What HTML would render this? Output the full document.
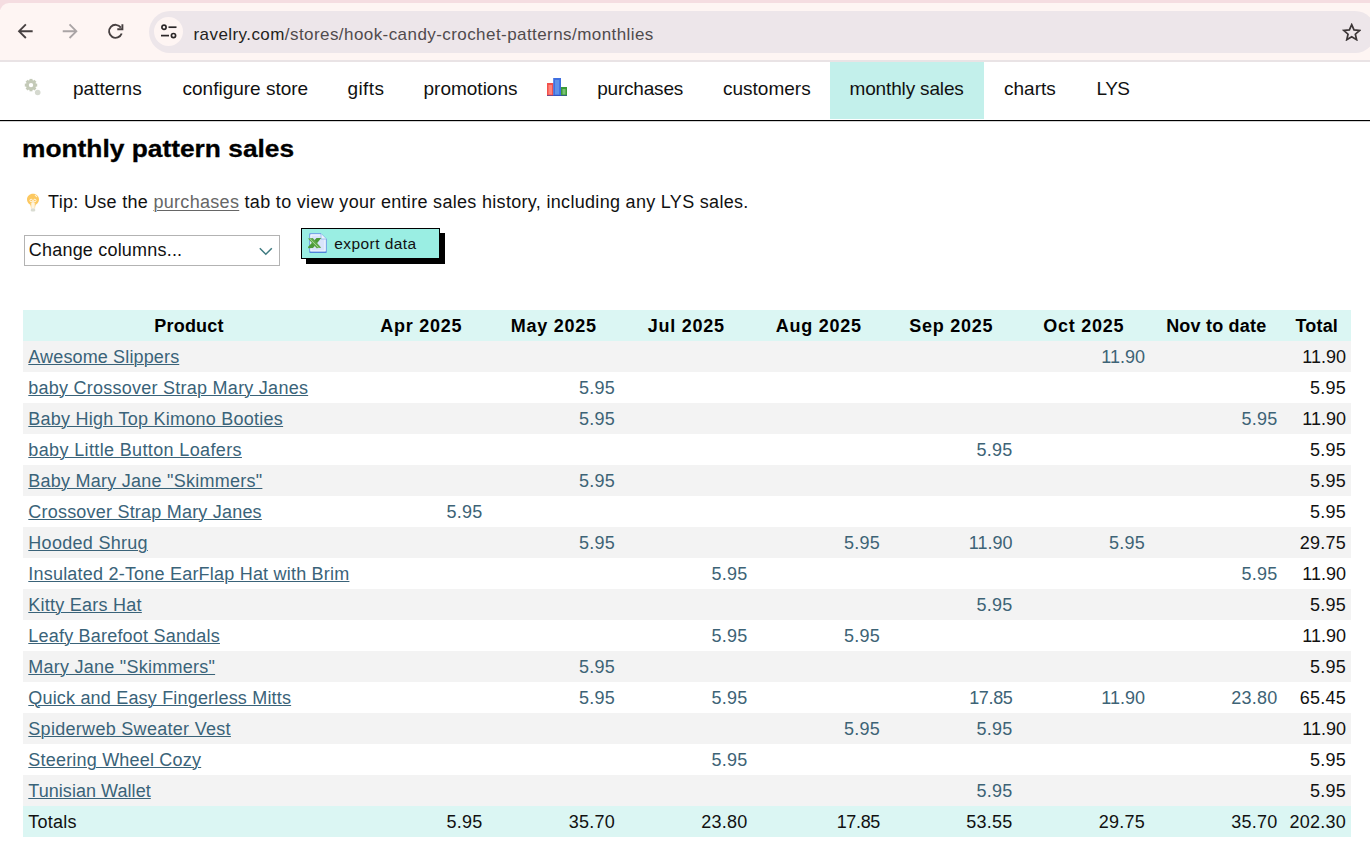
<!DOCTYPE html>
<html lang="en">
<head>
<meta charset="utf-8">
<title>monthly pattern sales</title>
<style>
html,body{margin:0;padding:0;}
body{width:1370px;height:856px;overflow:hidden;background:#fff;position:relative;font-family:"Liberation Sans",sans-serif;color:#111;}
.abs{position:absolute;}
/* browser chrome */
#strip{left:0;top:0;width:1370px;height:10px;background:#f5dde1;}
#toolbar{left:0;top:3px;width:1370px;height:57px;background:#fef5f3;border-top-left-radius:9px;}
#tbline{left:0;top:60px;width:1370px;height:2px;background:#e9e3e5;}
#pill{left:149px;top:11px;width:1227px;height:41.5px;border-radius:21px;background:#ede6ea;}
#site{left:154px;top:17px;width:29px;height:29px;border-radius:50%;background:#fef5f3;}
#url{left:193.5px;top:23.5px;font-size:17px;letter-spacing:0.43px;line-height:22px;white-space:nowrap;color:#504b4d;}
#url b{font-weight:400;color:#231f20;}
/* nav */
#navline{left:0;top:120px;width:1370px;height:1px;background:#000;border-bottom:1px solid #d4d4d4;}
#active{left:830px;top:62px;width:154px;height:56.5px;background:#c3f0eb;}
.nav{top:77px;font-size:19px;line-height:24px;white-space:nowrap;color:#111;}
/* heading */
#h1{left:21.6px;-webkit-text-stroke:0.3px #000;top:133px;font-size:24px;line-height:32px;font-weight:700;white-space:nowrap;color:#000;transform-origin:0 50%;transform:scaleX(1.097);}
#tip{left:48px;top:190px;font-size:18px;letter-spacing:0.31px;line-height:24px;white-space:nowrap;color:#111;}
#tip a{color:#666;text-decoration:underline;text-decoration-thickness:1px;text-underline-offset:2px;}
#sel{left:24px;top:235px;width:254px;height:29px;border:1px solid #b3b3b3;background:#fff;}
#seltxt{left:28.8px;top:238px;font-size:18px;letter-spacing:0.2px;line-height:24px;white-space:nowrap;color:#111;}
#btn{left:301px;top:228px;width:137px;height:29px;border:1px solid #000;background:#9aeee3;box-shadow:5px 5px 0 #000;}
#btntxt{left:334.2px;top:234px;font-size:15.5px;letter-spacing:0.45px;line-height:20px;white-space:nowrap;color:#111;}
/* table */
table{position:absolute;left:23px;top:310px;width:1328px;border-collapse:collapse;border-spacing:0;table-layout:fixed;font-size:18px;}
col.c0{width:332px;} col.cm{width:132.5px;} col.ct{width:68.5px;}
tr{height:31px;}
td,th{padding:2px 0 0 0;margin:0;height:31px;line-height:29px;box-sizing:border-box;white-space:nowrap;overflow:visible;vertical-align:top;}
th{font-weight:700;text-align:center;color:#000;background:#dbf6f3;letter-spacing:0.2px;}
td{text-align:right;padding:2px 5px 0 0;color:#3d6376;letter-spacing:0.25px;}
td.p{text-align:left;padding:2px 0 0 5.3px;}
td.p a{color:#3a6379;text-decoration:underline;text-decoration-thickness:1.3px;text-underline-offset:1px;}
td.t{color:#111;}
th.m{letter-spacing:0.72px;}
td.n1{letter-spacing:0;}
td.n2{letter-spacing:-0.35px;}
tr.o td{background:#f3f3f3;}
tr.tot td{background:#dbf6f3;color:#111;}
</style>
</head>
<body>
<div class="abs" id="strip"></div>
<div class="abs" id="toolbar"></div>
<div class="abs" id="tbline"></div>
<div class="abs" id="pill"></div>
<div class="abs" id="site"></div>
<!-- toolbar icons -->
<svg class="abs" style="left:14.400px;top:20.200px" width="22.400" height="22.400" viewBox="0 0 24 24"><path d="M20 11H7.83l5.59-5.59L12 4l-8 8 8 8 1.41-1.41L7.83 13H20v-2z" fill="#474041"/></svg>
<svg class="abs" style="left:59.200px;top:20.200px" width="22.400" height="22.400" viewBox="0 0 24 24"><path d="M12 4l-1.41 1.41L16.17 11H4v2h12.17l-5.58 5.59L12 20l8-8z" fill="#aaa4a5"/></svg>
<svg class="abs" style="left:105px;top:21px" width="21" height="21" viewBox="0 0 21 21" fill="none" stroke="#474041" stroke-width="1.900"><path d="M15.900 6.600A6.500 6.500 0 1 0 16.700 12.500"/><path d="M17.400 3.200V8.300H12.300"/></svg>
<svg class="abs" style="left:160px;top:23px" width="18" height="17" viewBox="0 0 18 17" fill="none" stroke="#2b2728" stroke-width="1.7"><circle cx="4" cy="4.2" r="2.1"/><line x1="8.5" y1="4.2" x2="16.5" y2="4.2"/><circle cx="13.5" cy="12.6" r="2.1"/><line x1="1" y1="12.6" x2="9" y2="12.6"/></svg>
<svg class="abs" style="left:1341.700px;top:22.800px" width="19.400" height="18.500" viewBox="0 0 21 20"><path d="M10.5 1.8l2.5 5.7 6.100.55-4.650 4.050 1.400 6-5.350-3.200-5.350 3.200 1.400-6-4.650-4.050 6.100-.55z" fill="none" stroke="#3c3637" stroke-width="1.85" stroke-linejoin="miter"/></svg>
<div class="abs" id="url"><b>ravelry.com</b>/stores/hook-candy-crochet-patterns/monthlies</div>

<!-- nav -->
<div class="abs" id="active"></div>
<div class="abs" id="navline"></div>
<svg class="abs" style="left:23px;top:77px" width="20" height="20" viewBox="0 0 20 20"><g stroke="#c4cab8" stroke-width="3" stroke-linecap="butt"><line x1="8" y1="1.900" x2="8" y2="14.300"/><line x1="1.800" y1="8.100" x2="14.200" y2="8.100"/><line x1="3.620" y1="3.720" x2="12.380" y2="12.480"/><line x1="12.380" y1="3.720" x2="3.620" y2="12.480"/></g><circle cx="8" cy="8.100" r="5.100" fill="#c4cab8"/><circle cx="8" cy="8.100" r="2.200" fill="#fff"/><circle cx="14.700" cy="15.500" r="2.800" fill="#d5d9cf"/></svg>
<div class="abs nav" style="left:73px">patterns</div>
<div class="abs nav" style="left:182.500px">configure store</div>
<div class="abs nav" style="left:347.500px;letter-spacing:0.4px">gifts</div>
<div class="abs nav" style="left:423.500px">promotions</div>
<svg class="abs" style="left:546px;top:77px" width="22" height="20" viewBox="0 0 22 20"><rect x="1" y="6" width="6.500" height="13" fill="#f2514b"/><rect x="2.500" y="8" width="3.500" height="9.500" fill="#ff837a"/><rect x="7.200" y="1" width="7.800" height="18" fill="#3f6fe0"/><rect x="9" y="3" width="4.200" height="14.500" fill="#5f92ea"/><rect x="15" y="10" width="6" height="9" fill="#3c9a36"/><rect x="16.500" y="12" width="3" height="5.500" fill="#79c274"/><rect x="1" y="18" width="20" height="1" fill="#2f3fa8" opacity=".6"/></svg>
<div class="abs nav" style="left:597.200px;letter-spacing:-0.2px">purchases</div>
<div class="abs nav" style="left:723px">customers</div>
<div class="abs nav" style="left:849.500px;letter-spacing:-0.15px">monthly sales</div>
<div class="abs nav" style="left:1004px">charts</div>
<div class="abs nav" style="left:1096.500px;letter-spacing:-0.5px">LYS</div>

<!-- heading -->
<div class="abs" id="h1">monthly pattern sales</div>
<svg class="abs" style="left:26px;top:193px" width="14" height="20" viewBox="0 0 14 20"><path d="M7 .8C3.500.8 1 3.300 1 6.400c0 2.100 1.200 3.700 2.600 4.900.8.700 1.200 1.500 1.300 2.700h4.200c.1-1.200.5-2 1.300-2.700C11.800 10.100 13 8.500 13 6.400 13 3.300 10.500.8 7 .8z" fill="#fcc860"/><rect x="4.800" y="10" width="4.400" height="5.500" fill="#fde6b6"/><circle cx="5.200" cy="7.500" r="1.250" fill="none" stroke="#fffaf0" stroke-width=".9"/><circle cx="8.800" cy="7.500" r="1.250" fill="none" stroke="#fffaf0" stroke-width=".9"/><path d="M6.300 8.200v7M7.700 8.200v7" stroke="#fffaf0" stroke-width=".9" fill="none"/><path d="M9.300 2.400l1.400 1.300" stroke="#fff3d6" stroke-width="1.100" stroke-linecap="round"/><rect x="4.800" y="15.500" width="4.400" height="3" rx="1.200" fill="#d9dcd2"/></svg>
<div class="abs" id="tip">Tip: Use the <a>purchases</a> tab to view your entire sales history, including any LYS sales.</div>
<div class="abs" id="sel"></div>
<div class="abs" id="seltxt">Change columns...</div>
<svg class="abs" style="left:258px;top:246px" width="16" height="11" viewBox="0 0 16 11"><path d="M1.800 2.300l6 6 6-6" fill="none" stroke="#3e7a80" stroke-width="1.500"/></svg>
<div class="abs" id="btn"></div>
<svg class="abs" style="left:307px;top:232px" width="22" height="23" viewBox="0 0 22 23"><path d="M2.700 1.700h11.300l5.300 5.300v13.300h-16.600z" fill="#d9e4fb" stroke="#6a9ae6" stroke-width="1"/><path d="M4 3h9.500l4.500 4.500v11.500h-14z" fill="none" stroke="#f4f8ff" stroke-width="1"/><path d="M14 1.700v5.300h5.300" fill="#eef3fd" stroke="#8fb2ec" stroke-width=".8"/><path d="M2.700 20.300h16.600" stroke="#4a80d8" stroke-width="1.200"/><path d="M14.300 6l-4.800 0-8.500 9 .3 1.200 4.700-.2z" fill="#4c9a38"/><path d="M1 6.600l4.800-.6 8.400 9.700-4.600.6z" fill="#5fa848"/><path d="M3 6.800l8.500 8.800" stroke="#a5d392" stroke-width="1" fill="none"/></svg>
<div class="abs" id="btntxt">export data</div>

<table>
<colgroup><col class="c0"><col class="cm"><col class="cm"><col class="cm"><col class="cm"><col class="cm"><col class="cm"><col class="cm"><col class="ct"></colgroup>
<tr class="h"><th>Product</th><th class="m">Apr 2025</th><th class="m">May 2025</th><th class="m">Jul 2025</th><th class="m">Aug 2025</th><th class="m">Sep 2025</th><th class="m">Oct 2025</th><th>Nov to date</th><th>Total</th></tr>
<tr class="o"><td class="p"><a style="letter-spacing:0.140px">Awesome Slippers</a></td><td></td><td></td><td></td><td></td><td></td><td class="n1">11.90</td><td></td><td class="t n1">11.90</td></tr>
<tr class="e"><td class="p"><a>baby Crossover Strap Mary Janes</a></td><td></td><td>5.95</td><td></td><td></td><td></td><td></td><td></td><td class="t">5.95</td></tr>
<tr class="o"><td class="p"><a>Baby High Top Kimono Booties</a></td><td></td><td>5.95</td><td></td><td></td><td></td><td></td><td>5.95</td><td class="t n1">11.90</td></tr>
<tr class="e"><td class="p"><a style="letter-spacing:0.365px">baby Little Button Loafers</a></td><td></td><td></td><td></td><td></td><td>5.95</td><td></td><td></td><td class="t">5.95</td></tr>
<tr class="o"><td class="p"><a>Baby Mary Jane &quot;Skimmers&quot;</a></td><td></td><td>5.95</td><td></td><td></td><td></td><td></td><td></td><td class="t">5.95</td></tr>
<tr class="e"><td class="p"><a style="letter-spacing:0.210px">Crossover Strap Mary Janes</a></td><td>5.95</td><td></td><td></td><td></td><td></td><td></td><td></td><td class="t">5.95</td></tr>
<tr class="o"><td class="p"><a style="letter-spacing:0.290px">Hooded Shrug</a></td><td></td><td>5.95</td><td></td><td>5.95</td><td class="n1">11.90</td><td>5.95</td><td></td><td class="t">29.75</td></tr>
<tr class="e"><td class="p"><a style="letter-spacing:0.210px">Insulated 2-Tone EarFlap Hat with Brim</a></td><td></td><td></td><td>5.95</td><td></td><td></td><td></td><td>5.95</td><td class="t n1">11.90</td></tr>
<tr class="o"><td class="p"><a>Kitty Ears Hat</a></td><td></td><td></td><td></td><td></td><td>5.95</td><td></td><td></td><td class="t">5.95</td></tr>
<tr class="e"><td class="p"><a style="letter-spacing:0.205px">Leafy Barefoot Sandals</a></td><td></td><td></td><td>5.95</td><td>5.95</td><td></td><td></td><td></td><td class="t n1">11.90</td></tr>
<tr class="o"><td class="p"><a>Mary Jane &quot;Skimmers&quot;</a></td><td></td><td>5.95</td><td></td><td></td><td></td><td></td><td></td><td class="t">5.95</td></tr>
<tr class="e"><td class="p"><a style="letter-spacing:0.185px">Quick and Easy Fingerless Mitts</a></td><td></td><td>5.95</td><td>5.95</td><td></td><td class="n2">17.85</td><td class="n1">11.90</td><td>23.80</td><td class="t">65.45</td></tr>
<tr class="o"><td class="p"><a style="letter-spacing:0.295px">Spiderweb Sweater Vest</a></td><td></td><td></td><td></td><td>5.95</td><td>5.95</td><td></td><td></td><td class="t n1">11.90</td></tr>
<tr class="e"><td class="p"><a style="letter-spacing:0.200px">Steering Wheel Cozy</a></td><td></td><td></td><td>5.95</td><td></td><td></td><td></td><td></td><td class="t">5.95</td></tr>
<tr class="o"><td class="p"><a style="letter-spacing:0.050px">Tunisian Wallet</a></td><td></td><td></td><td></td><td></td><td>5.95</td><td></td><td></td><td class="t">5.95</td></tr>
<tr class="tot"><td class="p">Totals</td><td>5.95</td><td>35.70</td><td>23.80</td><td class="n2">17.85</td><td>53.55</td><td>29.75</td><td>35.70</td><td>202.30</td></tr>
</table>
</body>
</html>
